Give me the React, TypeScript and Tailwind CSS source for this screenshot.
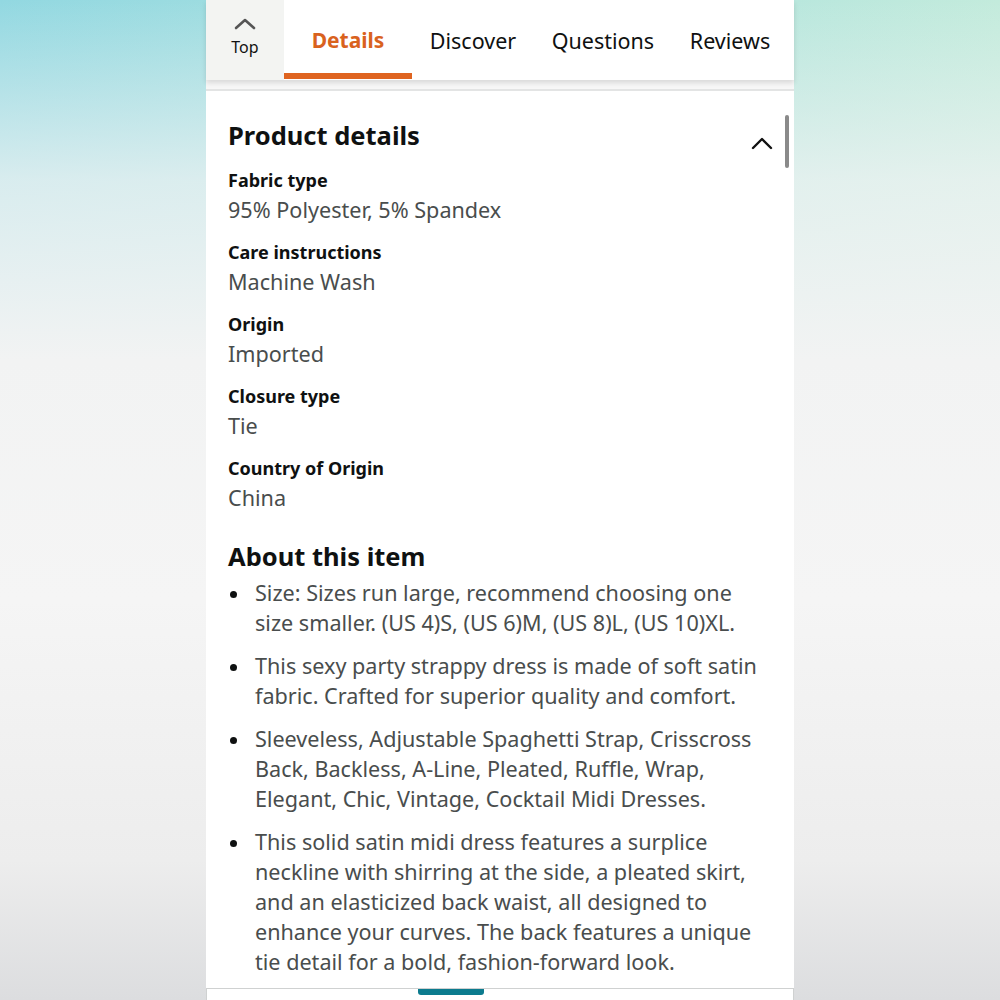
import React from "react";

const details = [
  ["Fabric type", "95% Polyester, 5% Spandex"],
  ["Care instructions", "Machine Wash"],
  ["Origin", "Imported"],
  ["Closure type", "Tie"],
  ["Country of Origin", "China"],
];

const bullets = [
  "Size: Sizes run large, recommend choosing one size smaller. (US 4)S, (US 6)M, (US 8)L, (US 10)XL.",
  "This sexy party strappy dress is made of soft satin fabric. Crafted for superior quality and comfort.",
  "Sleeveless, Adjustable Spaghetti Strap, Crisscross Back, Backless, A-Line, Pleated, Ruffle, Wrap, Elegant, Chic, Vintage, Cocktail Midi Dresses.",
  "This solid satin midi dress features a surplice neckline with shirring at the side, a pleated skirt, and an elasticized back waist, all designed to enhance your curves. The back features a unique tie detail for a bold, fashion-forward look.",
];

export default function App() {
  return (
    <div
      className="w-[1000px] h-[1000px] overflow-hidden flex justify-center bg-[linear-gradient(180deg,rgba(243,244,244,0)_0%,rgba(240,243,243,0.75)_18%,#f2f3f3_36%,#f5f5f5_60%,#ededed_86%,#dcdddf_100%),linear-gradient(90deg,#92d8e1,#c3ebdc)]"
      style={{ fontFamily: '"Noto Sans", "Open Sans", sans-serif' }}
    >
      <div className="w-[588px] h-[1000px] flex flex-col bg-white">
        {/* Tab header */}
        <div className="h-[80px] shrink-0 flex bg-white shadow-[0_3px_5px_rgba(0,0,0,0.12)] relative z-10">
          <div className="w-[78px] bg-[#f3f4f2] flex flex-col items-center pt-[17px]">
            <svg width="22" height="13" viewBox="0 0 22 13" fill="none">
              <path d="M2 11 L11 3 L20 11" stroke="#555" strokeWidth="2.6" strokeLinecap="round" strokeLinejoin="round" />
            </svg>
            <span className="text-[16px] leading-[20px] text-[#111] mt-[7px]">Top</span>
          </div>
          <div className="w-[128px] flex flex-col items-center justify-between">
            <span className="text-[21px] font-bold text-[#d9621e] mt-[25px] leading-[30px]">Details</span>
            <div className="h-[6px] w-full bg-[#df6420] mb-[1px]" />
          </div>
          <div className="flex flex-1 items-center justify-around pr-[6px] pt-[2px]">
            <span className="text-[21.5px] text-[#0f1111]">Discover</span>
            <span className="text-[21.5px] text-[#0f1111]">Questions</span>
            <span className="text-[21.5px] text-[#0f1111]">Reviews</span>
          </div>
        </div>
        <div className="h-[9px] shrink-0 bg-[#f7f7f7]" />
        <div className="h-[2px] shrink-0 bg-[#e3e4e4]" />
        {/* Content */}
        <div className="flex-1 min-h-0 overflow-hidden relative pl-[22px] pr-[24px] pt-[20px]">
          <div className="absolute right-[5px] top-[24px] w-[4px] h-[53px] rounded-full bg-[#8a8a8a]" />
          <div className="flex items-center justify-between pr-[6px]">
            <h2 className="text-[25.5px] font-bold text-[#0f1111] leading-[48px]">Product details</h2>
            <svg width="22" height="14" viewBox="0 0 22 14" fill="none" className="mt-[16px] mr-[-9px]">
              <path d="M2 12 L11 3 L20 12" stroke="#111" strokeWidth="2.4" strokeLinecap="round" strokeLinejoin="round" />
            </svg>
          </div>
          <div className="flex flex-col gap-[13px] mt-[7px]">
            {details.map(([k, v]) => (
              <div key={k} className="flex flex-col">
                <span className="text-[18px] font-bold text-[#0f1111] leading-[29px]">{k}</span>
                <span className="text-[21.6px] text-[#494d4d] leading-[30px]">{v}</span>
              </div>
            ))}
          </div>
          <h2 className="text-[25.5px] font-bold text-[#0f1111] leading-[40px] mt-[23px]">About this item</h2>
          <ul className="flex flex-col gap-[13px] mt-[2px]">
            {bullets.map((b, i) => (
              <li key={i} className="flex">
                <span className="w-[27px] shrink-0 pt-[13px] pl-[2px]">
                  <span className="block w-[7px] h-[7px] rounded-full bg-[#0f1111]" />
                </span>
                <span className="text-[21.6px] leading-[30px] text-[#494d4d]">{b}</span>
              </li>
            ))}
          </ul>
        </div>
        {/* Bottom sheet edge */}
        <div className="h-[12px] shrink-0 relative border-t border-x border-[#cfd1d1] bg-white">
          <div className="absolute left-[211px] top-0 w-[66px] h-[6px] rounded-b-[3px] bg-[#0c7b8e]" />
        </div>
      </div>
    </div>
  );
}
